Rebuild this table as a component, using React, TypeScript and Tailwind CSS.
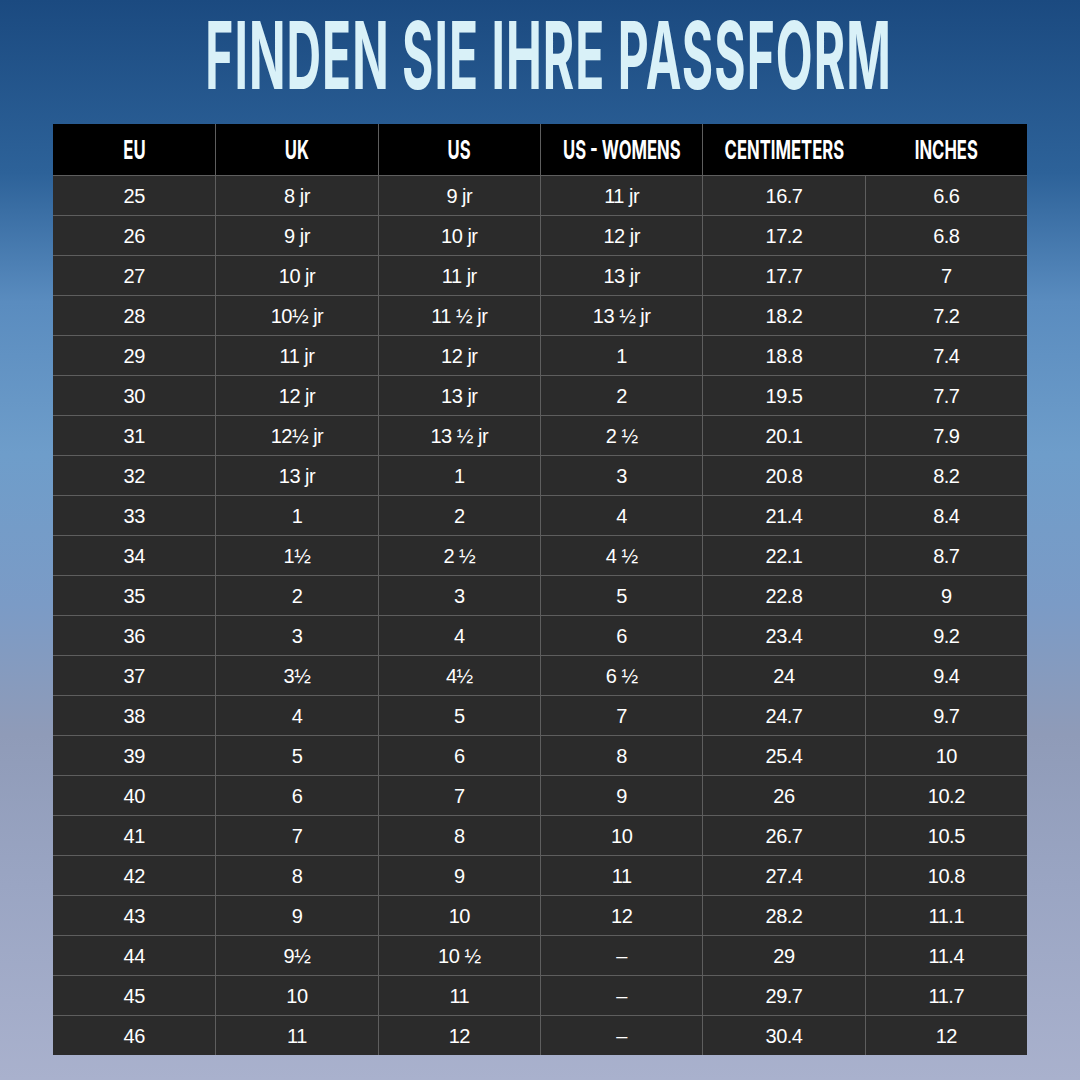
import React from "react";

const headers = ["EU", "UK", "US", "US - WOMENS", "CENTIMETERS", "INCHES"];

const rows: string[][] = [
  ["25", "8 jr", "9 jr", "11 jr", "16.7", "6.6"],
  ["26", "9 jr", "10 jr", "12 jr", "17.2", "6.8"],
  ["27", "10 jr", "11 jr", "13 jr", "17.7", "7"],
  ["28", "10½ jr", "11 ½ jr", "13 ½ jr", "18.2", "7.2"],
  ["29", "11 jr", "12 jr", "1", "18.8", "7.4"],
  ["30", "12 jr", "13 jr", "2", "19.5", "7.7"],
  ["31", "12½ jr", "13 ½ jr", "2 ½", "20.1", "7.9"],
  ["32", "13 jr", "1", "3", "20.8", "8.2"],
  ["33", "1", "2", "4", "21.4", "8.4"],
  ["34", "1½", "2 ½", "4 ½", "22.1", "8.7"],
  ["35", "2", "3", "5", "22.8", "9"],
  ["36", "3", "4", "6", "23.4", "9.2"],
  ["37", "3½", "4½", "6 ½", "24", "9.4"],
  ["38", "4", "5", "7", "24.7", "9.7"],
  ["39", "5", "6", "8", "25.4", "10"],
  ["40", "6", "7", "9", "26", "10.2"],
  ["41", "7", "8", "10", "26.7", "10.5"],
  ["42", "8", "9", "11", "27.4", "10.8"],
  ["43", "9", "10", "12", "28.2", "11.1"],
  ["44", "9½", "10 ½", "–", "29", "11.4"],
  ["45", "10", "11", "–", "29.7", "11.7"],
  ["46", "11", "12", "–", "30.4", "12"],
];

export default function App(): JSX.Element {
  return (
    <div className="w-[1080px] h-[1080px] overflow-hidden flex flex-col items-center bg-[linear-gradient(180deg,#1b4a80_0%,#2d6299_16%,#5a8cbf_28%,#6e9dca_42%,#7b9bc6_56%,#8f9bb8_68%,#9aa5c3_82%,#a9b1cd_100%)]">
      {/* Title */}
      <div className="h-[124px] w-full flex justify-center pl-[18px]">
        <h1 className="whitespace-nowrap text-[93px] leading-[110px] font-bold tracking-[2px] text-[#d9f1f8] scale-x-[0.515] [font-family:Inter,'Liberation_Sans',sans-serif]">
          FINDEN SIE IHRE PASSFORM
        </h1>
      </div>

      {/* Size table */}
      <div className="w-[974px] bg-[#2b2b2b]">
        <div className="grid grid-cols-6 h-[51px] bg-black">
          {headers.map((h, i) => (
            <div
              key={h}
              className={
                "flex items-center justify-center " +
                (i > 0 && i < 5 ? "border-l border-[#5e5e5e]" : "")
              }
            >
              <span className="whitespace-nowrap text-[26px] font-bold text-white scale-x-[0.64] [font-family:Inter,'Liberation_Sans',sans-serif]">
                {h}
              </span>
            </div>
          ))}
        </div>
        {rows.map((r) => (
          <div key={r[0]} className="grid grid-cols-6 h-[40px] border-t border-[#5e5e5e]">
            {r.map((c, i) => (
              <div
                key={i}
                className={
                  "flex items-center justify-center text-[20px] tracking-tight text-white [font-family:'Liberation_Sans',Arial,sans-serif] " +
                  (i > 0 ? "border-l border-[#5e5e5e]" : "")
                }
              >
                {c}
              </div>
            ))}
          </div>
        ))}
      </div>
    </div>
  );
}
